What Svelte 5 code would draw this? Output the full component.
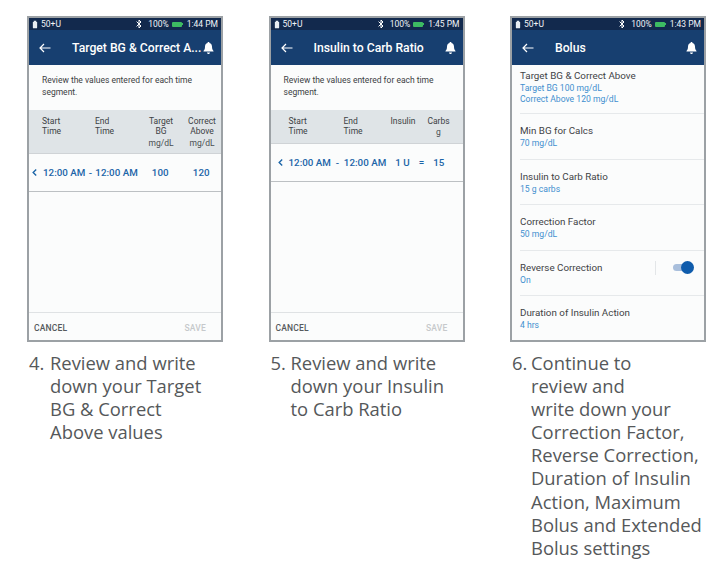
<script>
  const bolus = [
    { title: "Target BG & Correct Above", lines: ["Target BG 100 mg/dL", "Correct Above 120 mg/dL"] },
    { title: "Min BG for Calcs", lines: ["70 mg/dL"] },
    { title: "Insulin to Carb Ratio", lines: ["15 g carbs"] },
    { title: "Correction Factor", lines: ["50 mg/dL"] },
    { title: "Reverse Correction", lines: ["On"], toggle: true },
    { title: "Duration of Insulin Action", lines: ["4 hrs"] }
  ];
  const intro = "Review the values entered for each time segment.";
</script>

{#snippet statusBar(time)}
  <div class="status">
    <svg class="vial" viewBox="0 0 7 9" width="6" height="9"><path d="M2 0h3v1.500h1V8a1 1 0 0 1-1 1H2a1 1 0 0 1-1-1V1.500h1z" fill="#e8edf2" /></svg>
    <span class="reservoir">50+U</span>
    <svg class="bt" viewBox="0 0 6 10" width="6" height="10"><path d="M.6 2.600 5 7 3 9V1l2 2L.6 7.400" fill="none" stroke="#fff" stroke-width="1" /></svg>
    <span class="pct">100%</span>
    <span class="battery"></span>
    <span class="time">{time}</span>
  </div>
{/snippet}

{#snippet header(title, time)}
  {@render statusBar(time)}
  <div class="header">
    <svg class="back" viewBox="0 0 12 10" width="12" height="10"><path d="M11.500 5H1.200M5 1 1 5l4 4" fill="none" stroke="#fff" stroke-width="1.200" /></svg>
    <span class="title">{title}</span>
    <svg class="bell" viewBox="0 0 11 12" width="11" height="12"><path d="M5.500 0c.6 0 1 .4 1 1 1.700.5 2.500 1.900 2.500 3.600 0 2.200.5 3.400 1.500 4.400v.6H.5V9c1-1 1.500-2.200 1.500-4.400C2 2.900 2.800 1.500 4.500 1c0-.6.4-1 1-1zM4 10.500h3C7 11.400 6.300 12 5.500 12S4 11.400 4 10.500z" fill="#fff" /></svg>
  </div>
{/snippet}

{#snippet chevron()}
  <span class="chev"><svg viewBox="0 0 5 7" width="5" height="7"><path d="M4.200.6 1.200 3.500l3 2.900" fill="none" stroke="#1b65a8" stroke-width="1.400" /></svg></span>
{/snippet}

{#snippet footer()}
  <div class="spacer"></div>
  <div class="footer">
    <span class="cancel">CANCEL</span>
    <span class="save">SAVE</span>
  </div>
{/snippet}

<div class="page">
  <section class="col">
    <div class="phone">
      {@render header("Target BG & Correct A...", "1:44 PM")}
      <p class="intro">{intro}</p>
      <div class="thead bg-cols">
        <div class="th left">Start<br />Time</div>
        <div class="th left">End<br />Time</div>
        <div class="th">Target<br />BG<small>mg/dL</small></div>
        <div class="th">Correct<br />Above<small>mg/dL</small></div>
      </div>
      <div class="trow bg-cols">
        {@render chevron()}
        <span>12:00 AM</span>
        <span class="dash">-</span>
        <span>12:00 AM</span>
        <span class="num">100</span>
        <span class="num">120</span>
      </div>
      {@render footer()}
    </div>
    <p class="caption first"><span class="n">4.</span><span class="body">Review and write down your Target BG &amp; Correct Above values</span></p>
  </section>

  <section class="col">
    <div class="phone">
      {@render header("Insulin to Carb Ratio", "1:45 PM")}
      <p class="intro">{intro}</p>
      <div class="thead carb-cols">
        <div class="th left">Start<br />Time</div>
        <div class="th left">End<br />Time</div>
        <div class="th">Insulin</div>
        <div class="th">Carbs<small class="g">g</small></div>
      </div>
      <div class="trow carb-cols">
        {@render chevron()}
        <span>12:00 AM</span>
        <span class="dash">-</span>
        <span>12:00 AM</span>
        <span class="num">1 U</span>
        <span class="eq">=</span>
        <span class="num">15</span>
      </div>
      {@render footer()}
    </div>
    <p class="caption"><span class="n">5.</span><span class="body">Review and write down your Insulin to Carb Ratio</span></p>
  </section>

  <section class="col">
    <div class="phone">
      {@render header("Bolus", "1:43 PM")}
      <ul class="list">
        {#each bolus as item}
          <li>
            <div>
              <div class="item-title">{item.title}</div>
              {#each item.lines as line}
                <div class="item-value">{line}</div>
              {/each}
            </div>
            {#if item.toggle}
              <div class="toggle-wrap"><span class="toggle"><span class="knob"></span></span></div>
            {/if}
          </li>
        {/each}
      </ul>
    </div>
    <p class="caption last"><span class="n">6.</span><span class="body">Continue to<br />review and<br />write down your Correction Factor, Reverse Correction, Duration of Insulin Action, Maximum Bolus and Extended Bolus settings</span></p>
  </section>
</div>

<style>
  :global(body) {
    margin: 0;
    background: #fff;
  }

  .page {
    display: flex;
    gap: 45.5px;
    width: 725px;
    height: 567px;
    box-sizing: border-box;
    padding: 16px 0 0 27px;
    font-family: Roboto, "Liberation Sans", sans-serif;
    overflow: hidden;
  }

  .col {
    width: 196px;
    flex: none;
  }

  .phone {
    height: 326px;
    box-sizing: border-box;
    border: 2px solid #9ca1a5;
    background: #fbfcfc;
    display: flex;
    flex-direction: column;
    overflow: hidden;
  }

  .status {
    height: 12px;
    background: #12294d;
    display: flex;
    align-items: center;
    color: #f1f4f7;
    font-size: 8.5px;
    padding: 0 3px;
    flex: none;
  }

  .reservoir {
    margin-left: 3px;
    flex: 1;
  }

  .pct {
    margin-left: 6px;
  }

  .battery {
    width: 10px;
    height: 5px;
    margin: 0 5px 0 3px;
    background: #3dbb62;
    border-radius: 1px;
    position: relative;
  }

  .battery::after {
    content: "";
    position: absolute;
    right: -1px;
    top: 1.5px;
    width: 1px;
    height: 2px;
    background: #3dbb62;
  }

  .header {
    height: 35px;
    background: #173f70;
    display: flex;
    align-items: center;
    color: #fff;
    padding: 0 7px 0 10px;
    flex: none;
  }

  .title {
    flex: 1;
    margin-left: 21px;
    font-size: 12.2px;
    font-weight: 500;
    white-space: nowrap;
  }

  .intro {
    margin: 0;
    padding: 10px 20px 11px 13px;
    font-size: 8.5px;
    line-height: 11.5px;
    color: #3c4043;
    height: 24px;
    flex: none;
  }

  .thead {
    background: #dfe4e7;
    font-size: 8.5px;
    line-height: 9.5px;
    color: #3c4144;
    padding-top: 7px;
    box-sizing: border-box;
    border-bottom: 1px solid #cfd3d6;
    flex: none;
    display: grid;
  }

  .th {
    text-align: center;
  }

  .th.left {
    text-align: left;
  }

  small {
    display: block;
    font-size: 8.5px;
    margin-top: 3px;
    color: #4a4f52;
  }

  small.g {
    margin-top: 1px;
  }

  .bg-cols.thead {
    grid-template-columns: 53px 48px 36px 46px;
    padding-left: 13px;
    height: 44px;
  }

  .carb-cols.thead {
    grid-template-columns: 55px 42px 35px 36px;
    padding-left: 18px;
    height: 34px;
  }

  .trow {
    display: flex;
    align-items: center;
    height: 37px;
    color: #1b65a8;
    font-size: 9.8px;
    font-weight: 500;
    border-bottom: 1px solid #bcc0c3;
    white-space: nowrap;
    flex: none;
  }

  .chev {
    width: 14px;
    display: flex;
    padding-left: 3px;
    box-sizing: border-box;
  }

  .dash {
    width: 10px;
    text-align: center;
  }

  .bg-cols .num {
    width: 31px;
    text-align: center;
  }

  .bg-cols .num:nth-last-child(2) {
    margin-left: 7px;
    margin-right: 10px;
  }

  .carb-cols.trow {
    padding-left: 4px;
  }

  .carb-cols .dash {
    width: 13px;
  }

  .carb-cols .num {
    margin-left: 9px;
  }

  .eq {
    margin-left: 9px;
  }

  .spacer {
    flex: 1;
  }

  .footer {
    height: 28px;
    box-sizing: border-box;
    border-top: 1px solid #dfe2e4;
    display: flex;
    justify-content: space-between;
    align-items: center;
    padding: 3px 15px 0 5px;
    font-size: 8.5px;
    font-weight: 500;
    letter-spacing: 0.2px;
    flex: none;
  }

  .cancel {
    color: #55595c;
  }

  .save {
    color: #c6c9cb;
  }

  .list {
    list-style: none;
    margin: 0;
    padding: 0 0 0 8px;
    flex: 1;
    overflow: hidden;
  }

  li {
    height: 45.5px;
    padding-top: 10px;
    box-sizing: border-box;
    border-bottom: 1px solid #e6e9eb;
    display: flex;
    justify-content: space-between;
  }

  li:first-child {
    height: 49px;
    padding-top: 4px;
  }

  li:last-child {
    border-bottom: none;
  }

  .item-title {
    font-size: 9.8px;
    line-height: 13px;
    color: #3f4346;
  }

  .item-value {
    font-size: 8.6px;
    line-height: 10.5px;
    color: #3f8fcf;
  }

  .item-title + .item-value {
    margin-top: 1px;
  }

  .toggle-wrap {
    border-left: 1px solid #e3e6e8;
    height: 14px;
    width: 37px;
    display: flex;
    align-items: center;
    justify-content: flex-end;
    padding-right: 11px;
  }

  .toggle {
    display: block;
    width: 20px;
    height: 7px;
    border-radius: 4px;
    background: #a9bfdc;
    position: relative;
  }

  .knob {
    position: absolute;
    right: -1px;
    top: -3px;
    width: 13px;
    height: 13px;
    border-radius: 50%;
    background: #0f5cac;
  }

  .caption {
    margin: 9px 0 0 2px;
    display: flex;
    font-family: "Open Sans", sans-serif;
    font-size: 18.4px;
    line-height: 23.1px;
    color: #55585a;
  }

  .caption .n {
    width: 20px;
    flex: none;
  }

  .caption .body {
    width: 160px;
  }

  .caption.first .n {
    width: 21px;
  }

  .caption.last .n {
    width: 19px;
  }

  .caption.last .body {
    width: 175px;
  }
</style>
